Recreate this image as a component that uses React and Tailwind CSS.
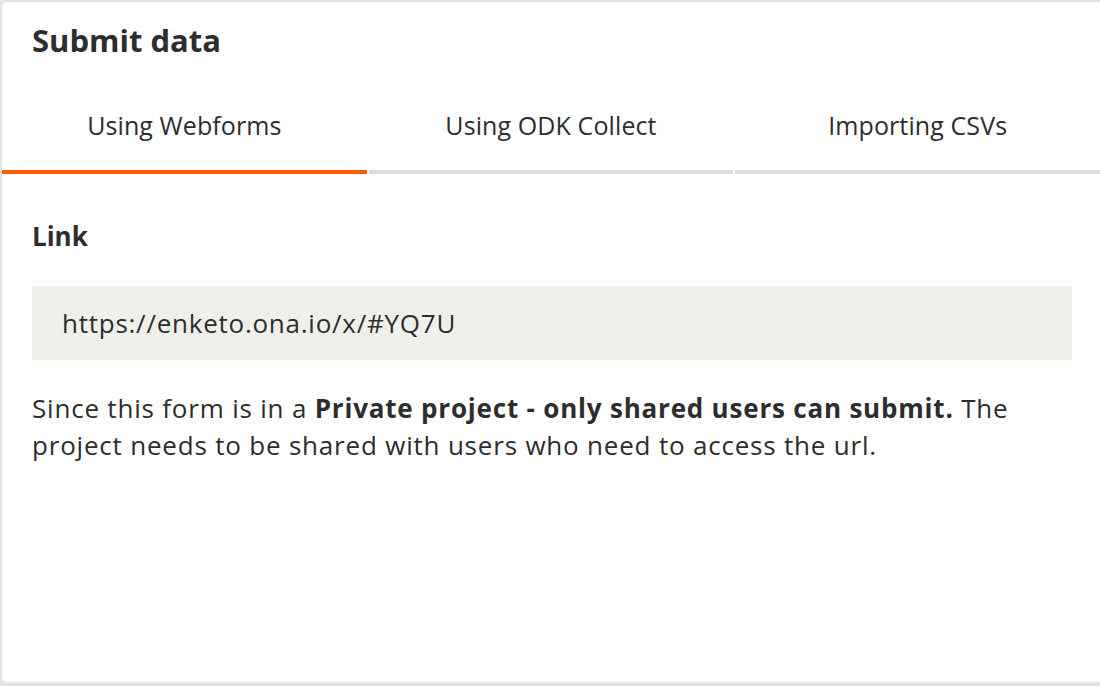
import React from 'react';

const tabs = ['Using Webforms', 'Using ODK Collect', 'Importing CSVs'];

export default function App() {
  const [active, setActive] = React.useState(0);

  return (
    <div
      className="w-[1100px] h-[686px] bg-[#e2e2e2] pt-[2px] pl-[2px] pb-[4px] text-[#2d2d2d]"
      style={{ fontFamily: '"Open Sans", Lato, sans-serif' }}
    >
      <div className="h-full bg-white rounded-l-[5px] flex flex-col">
        {/* Header */}
        <h1 className="pl-[30px] pt-[20px] h-[78px] text-[31px] font-bold leading-[36px]">Submit data</h1>

        {/* Tabs */}
        <div className="flex gap-[2px]">
          {tabs.map((t, i) => (
            <button
              key={t}
              onClick={() => setActive(i)}
              className={`flex-1 h-[94px] text-[25px] leading-[30px] tracking-[0.1px] border-b-4 ${
                i === active ? 'border-[#ff5a00]' : 'border-[#dcdcdc]'
              }`}
            >
              {t}
            </button>
          ))}
        </div>

        {/* Body */}
        <div className="pl-[30px] pr-[28px] pt-[46px]">
          <h2 className="text-[26px] font-bold leading-[32px]">Link</h2>
          <div className="mt-[34px] h-[74px] bg-[#f0f0eb] pl-[30px] flex items-center text-[26px] tracking-[0.75px]">
            https://enketo.ona.io/x/#YQ7U
          </div>
          <p className="mt-[30px] text-[26px] leading-[37px] tracking-[0.8px] pr-[60px]">
            Since this form is in a <strong>Private project - only shared users can submit.</strong> The project needs to be shared with users who need to access the url.
          </p>
        </div>
      </div>
    </div>
  );
}
